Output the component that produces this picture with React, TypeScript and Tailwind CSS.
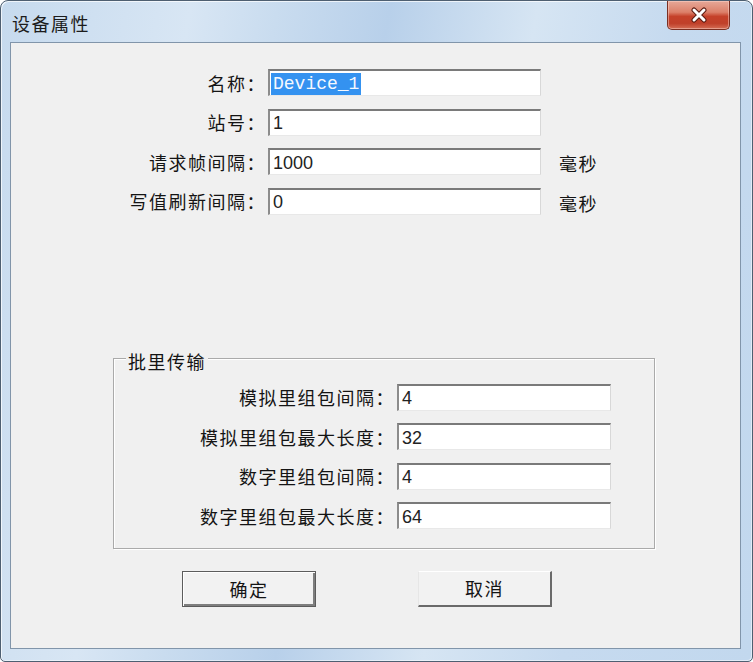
import React from 'react';

const cjk = "font-['Noto_Sans_CJK_SC','Noto_Sans',sans-serif]";

function Field({ value, width, selected }: { value: string; width: string; selected?: boolean }) {
  return (
    <div
      className={`flex h-[27px] items-center border-t-2 border-l-2 border-r border-b border-t-[#7a7a7a] border-l-[#8c8c8c] border-r-[#d8d8d8] border-b-[#e8e8e8] bg-white pt-[1px] ${width} ${selected ? 'pl-[1px]' : 'pl-[3px]'}`}
    >
      {selected ? (
        <span className="bg-[#3492f0] px-[2px] font-['Liberation_Mono',monospace] text-[18px] leading-[22px] text-[#f4f8ff]">
          {value}
        </span>
      ) : (
        <span className="font-['Liberation_Sans',Arial,sans-serif] text-[18px] leading-[22px] text-[#222222]">{value}</span>
      )}
    </div>
  );
}

function Row({
  label,
  value,
  labelW,
  fieldW,
  unit,
  selected,
}: {
  label: string;
  value: string;
  labelW: string;
  fieldW: string;
  unit?: string;
  selected?: boolean;
}) {
  return (
    <div className="flex h-[27px] items-center">
      <div className={`${labelW} text-right text-[18px] leading-[24px] tracking-[1.5px] text-[#141414]`}>{label}</div>
      <div className="ml-[2px]">
        <Field value={value} width={fieldW} selected={selected} />
      </div>
      {unit && <div className="ml-[18px] pt-[3px] text-[18px] leading-[24px] tracking-[1.5px] text-[#141414]">{unit}</div>}
    </div>
  );
}

export default function App() {
  return (
    <div className={`h-[662px] w-[753px] bg-white ${cjk}`}>
      <div className="flex h-full flex-col rounded-t-[8px] rounded-b-[5px] border border-[#4e5f71] bg-[linear-gradient(100deg,#c6daee_0%,#d8e6f4_22%,#c9dcef_32%,#b8d0ea_45%,#d6e5f3_62%,#c6daef_78%,#c2d8ee_100%)] shadow-[inset_1px_1px_0_rgba(255,255,255,0.7),inset_-1px_-1px_0_rgba(255,255,255,0.5)]">
        {/* 标题栏 */}
        <div className="flex h-[41px] items-start justify-between">
          <div className="pl-[11px] pt-[10px] text-[18px] leading-[24px] tracking-[1.5px] text-[#1c1c1c]">设备属性</div>
          <div className="mr-[22px] flex h-[29px] w-[63px] items-center justify-center rounded-b-[5px] border border-t-0 border-[#7a2f22] bg-[linear-gradient(180deg,#e6a898_0%,#dc806a_40%,#c5412a_55%,#c0402a_80%,#d46e56_100%)] shadow-[inset_0_0_0_1px_rgba(255,220,210,0.45)]">
            <svg width="18" height="16" viewBox="0 0 18 16">
              <path d="M4 3 L14 13 M14 3 L4 13" stroke="#5a1a10" strokeWidth="5" strokeLinecap="round" />
              <path d="M4 3 L14 13 M14 3 L4 13" stroke="#ffffff" strokeWidth="3" strokeLinecap="round" />
            </svg>
          </div>
        </div>

        {/* 客户区 */}
        <div className="mb-[12px] ml-[9px] mr-[11px] flex flex-1 flex-col border border-[#8195aa] bg-[#f0f0f0]">
          <div className="flex flex-col gap-[12.5px] pt-[26px]">
            <Row label="名称：" value="Device_1" labelW="w-[255px]" fieldW="w-[273px]" selected />
            <Row label="站号：" value="1" labelW="w-[255px]" fieldW="w-[273px]" />
            <Row label="请求帧间隔：" value="1000" labelW="w-[255px]" fieldW="w-[273px]" unit="毫秒" />
            <Row label="写值刷新间隔：" value="0" labelW="w-[255px]" fieldW="w-[273px]" unit="毫秒" />
          </div>

          {/* 批量传输 */}
          <div className="relative ml-[102px] mt-[143px] h-[191px] w-[542px] border border-[#aaaaaa] shadow-[inset_1px_1px_0_#ffffff,1px_1px_0_#ffffff]">
            <div className="absolute left-[12px] top-[-10px] bg-[#f0f0f0] px-[2px] text-[18px] leading-[24px] tracking-[1.5px] text-[#141414]">
              批里传输
            </div>
            <div className="flex flex-col gap-[12.5px] pt-[25px]">
              <Row label="模拟里组包间隔：" value="4" labelW="w-[281px]" fieldW="w-[214px]" />
              <Row label="模拟里组包最大长度：" value="32" labelW="w-[281px]" fieldW="w-[214px]" />
              <Row label="数字里组包间隔：" value="4" labelW="w-[281px]" fieldW="w-[214px]" />
              <Row label="数字里组包最大长度：" value="64" labelW="w-[281px]" fieldW="w-[214px]" />
            </div>
          </div>

          {/* 按钮 */}
          <div className="mt-[22px] flex pl-[171px]">
            <button className="flex h-[36px] w-[134px] items-center justify-center border border-[#5c5c5c] bg-[#f2f2f2] text-[18px] leading-[24px] tracking-[1.5px] text-[#141414] shadow-[inset_1px_1px_0_#ffffff,inset_-2px_-2px_0_#7e7e7e]">
              确定
            </button>
            <button className="ml-[102px] flex h-[36px] w-[134px] items-center justify-center border-t border-l border-r-2 border-b-2 border-t-[#ffffff] border-l-[#e6e6e6] border-r-[#6a6a6a] border-b-[#6a6a6a] bg-[#f2f2f2] text-[18px] leading-[24px] tracking-[1.5px] text-[#141414]">
              取消
            </button>
          </div>
        </div>
      </div>
    </div>
  );
}
